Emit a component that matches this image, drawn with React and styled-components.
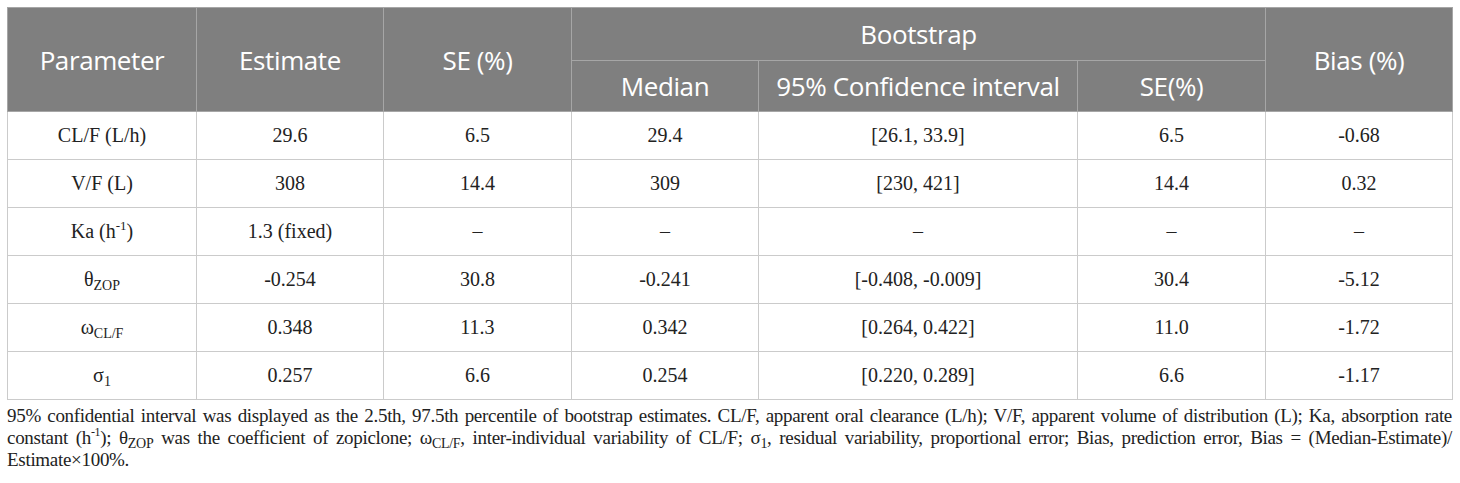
import React from 'react'
import styled, { createGlobalStyle } from 'styled-components'

const GlobalStyle = createGlobalStyle`
  html, body {
    margin: 0;
    padding: 0;
    background: #ffffff;
  }
`

const Page = styled.div`
  padding: 7px 8px 0 7px;
  width: 1445px;
`

const Table = styled.table`
  width: 1445px;
  border-collapse: collapse;
  table-layout: fixed;
`

const HeadRow = styled.tr`
  height: ${(p) => p.h}px;
`

const HeadCell = styled.th`
  background: #7f7f7f;
  color: #ffffff;
  font-family: 'Open Sans', 'Noto Sans', sans-serif;
  font-weight: 400;
  font-size: 26px;
  letter-spacing: -0.4px;
  text-align: center;
  vertical-align: middle;
  padding: 0;
  border: 1px solid #a6a6a6;
`

const Row = styled.tr`
  height: 48px;
`

const Cell = styled.td`
  font-family: 'Liberation Serif', 'Times New Roman', serif;
  font-size: 20px;
  color: #222222;
  text-align: center;
  vertical-align: middle;
  padding: 0;
  border: 1px solid #cbcbcb;

  sub {
    font-size: 14px;
    vertical-align: -4px;
    line-height: 0;
  }
  sup {
    font-size: 13px;
    vertical-align: 8px;
    line-height: 0;
  }
`

const Notes = styled.div`
  margin-top: 5px;
  width: 1445px;
  font-family: 'Liberation Serif', 'Times New Roman', serif;
  font-size: 19px;
  letter-spacing: -0.3px;
  line-height: 22px;
  color: #222222;

  sub {
    font-size: 14px;
    vertical-align: -4px;
    line-height: 0;
  }
  sup {
    font-size: 12px;
    vertical-align: 8px;
    line-height: 0;
  }
`

const NoteLine = styled.div`
  text-align: ${(p) => (p.last ? 'left' : 'justify')};
  text-align-last: ${(p) => (p.last ? 'left' : 'justify')};
  white-space: nowrap;
`

const widths = [189, 187, 188, 187, 319, 188, 187]

const rows = [
  [<>CL/F (L/h)</>, '29.6', '6.5', '29.4', '[26.1, 33.9]', '6.5', '-0.68'],
  [<>V/F (L)</>, '308', '14.4', '309', '[230, 421]', '14.4', '0.32'],
  [<>Ka (h<sup>-1</sup>)</>, '1.3 (fixed)', '–', '–', '–', '–', '–'],
  [<>θ<sub>ZOP</sub></>, '-0.254', '30.8', '-0.241', '[-0.408, -0.009]', '30.4', '-5.12'],
  [<>ω<sub>CL/F</sub></>, '0.348', '11.3', '0.342', '[0.264, 0.422]', '11.0', '-1.72'],
  [<>σ<sub>1</sub></>, '0.257', '6.6', '0.254', '[0.220, 0.289]', '6.6', '-1.17'],
]

export default function App() {
  return (
    <Page>
      <GlobalStyle />
      <Table>
        <colgroup>
          {widths.map((w, i) => (
            <col key={i} style={{ width: w }} />
          ))}
        </colgroup>
        <thead>
          <HeadRow h={53}>
            <HeadCell rowSpan={2}>Parameter</HeadCell>
            <HeadCell rowSpan={2}>Estimate</HeadCell>
            <HeadCell rowSpan={2}>SE (%)</HeadCell>
            <HeadCell colSpan={3}>Bootstrap</HeadCell>
            <HeadCell rowSpan={2}>Bias (%)</HeadCell>
          </HeadRow>
          <HeadRow h={51}>
            <HeadCell>Median</HeadCell>
            <HeadCell>95% Confidence interval</HeadCell>
            <HeadCell>SE(%)</HeadCell>
          </HeadRow>
        </thead>
        <tbody>
          {rows.map((r, i) => (
            <Row key={i}>
              {r.map((c, j) => (
                <Cell key={j}>{c}</Cell>
              ))}
            </Row>
          ))}
        </tbody>
      </Table>
      <Notes>
        <NoteLine>
          95% confidential interval was displayed as the 2.5th, 97.5th percentile of bootstrap estimates. CL/F, apparent oral clearance (L/h); V/F, apparent volume of distribution (L); Ka, absorption rate
        </NoteLine>
        <NoteLine>
          constant (h<sup>-1</sup>); θ<sub>ZOP</sub> was the coefficient of zopiclone; ω<sub>CL/F</sub>, inter-individual variability of CL/F; σ<sub>1</sub>, residual variability, proportional error; Bias, prediction error, Bias = (Median-Estimate)/
        </NoteLine>
        <NoteLine last>Estimate×100%.</NoteLine>
      </Notes>
    </Page>
  )
}
